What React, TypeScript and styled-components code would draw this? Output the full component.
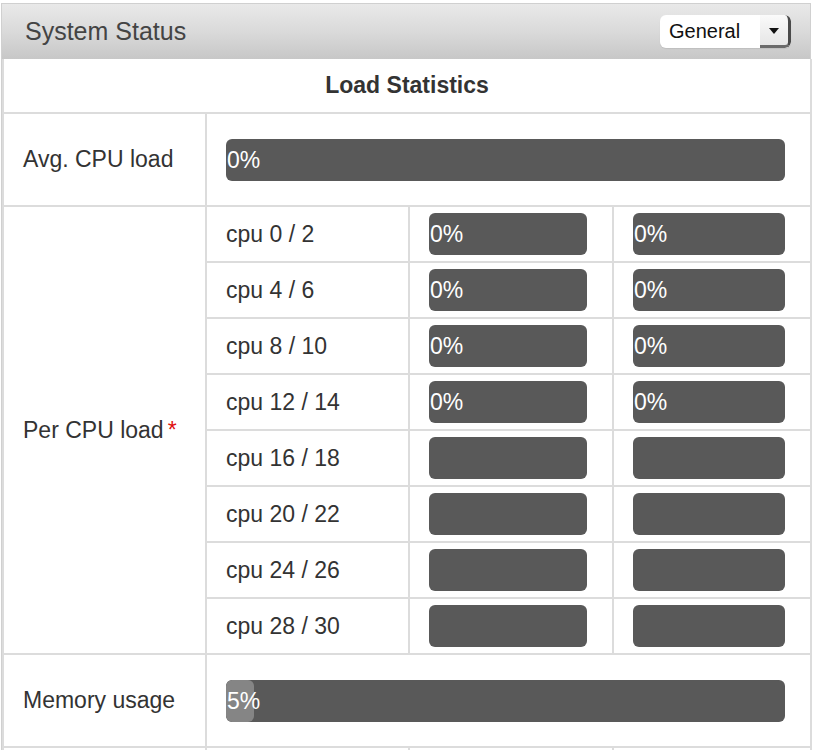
import React from 'react'
import styled, { createGlobalStyle } from 'styled-components'

const GlobalStyle = createGlobalStyle`
  body {
    margin: 0;
    background: #ffffff;
    font-family: "Liberation Sans", Arial, sans-serif;
    overflow: hidden;
  }
`

const Page = styled.div`
  padding: 3px 0 0 1px;
  height: 750px;
  box-sizing: border-box;
`

const Panel = styled.div`
  width: 810px;
  border: 1px solid #d0d0d0;
  border-bottom: none;
  box-sizing: border-box;
`

const Header = styled.div`
  display: flex;
  align-items: center;
  justify-content: space-between;
  height: 55px;
  padding: 0 19px 0 23px;
  background: linear-gradient(to bottom, #e9e9e9 0%, #dadada 50%, #c7c7c7 100%);
`

const Title = styled.h2`
  margin: 0;
  font-size: 25px;
  font-weight: normal;
  color: #444444;
`

const Select = styled.div`
  display: flex;
  align-items: stretch;
  width: 131px;
  height: 33px;
  background: #ffffff;
  border-radius: 6px;
  overflow: hidden;
  box-shadow: 0 1px 1px rgba(0, 0, 0, 0.08);
`

const SelectText = styled.span`
  flex: 1;
  display: flex;
  align-items: center;
  padding-left: 9px;
  font-size: 20px;
  color: #111111;
`

const SelectArrow = styled.span`
  display: flex;
  align-items: center;
  justify-content: center;
  width: 31px;
  background: linear-gradient(to bottom, #fafafa, #e6e6e6);
  border-right: 3px solid #4a4a4a;
  border-bottom: 3px solid #6a6a6a;
  border-bottom-right-radius: 6px;
  border-top-right-radius: 6px;
  box-sizing: border-box;
`

const Triangle = styled.span`
  width: 0;
  height: 0;
  border-left: 5px solid transparent;
  border-right: 5px solid transparent;
  border-top: 6px solid #111111;
  margin-top: 2px;
`

const Table = styled.table`
  width: 100%;
  border-collapse: collapse;
  table-layout: fixed;
  font-size: 23px;
  color: #333333;
`

const HeadCell = styled.th`
  height: 53px;
  padding: 0;
  border: 2px solid #dcdcdc;
  border-top: none;
  font-weight: bold;
  color: #333333;
  text-align: center;
`

const Cell = styled.td<{ $tall?: boolean }>`
  height: ${(p) => (p.$tall ? '91px' : '54px')};
  padding: 0 25px 0 19px;
  border: 2px solid #dcdcdc;
  vertical-align: middle;
  white-space: nowrap;
`

const Required = styled.span`
  color: #e01010;
  margin-left: 4px;
`

const Bar = styled.div`
  position: relative;
  height: 42px;
  background: #595959;
  border-radius: 6px;
  overflow: hidden;
`

const Fill = styled.div`
  height: 100%;
  background: #858585;
  border-radius: 6px;
`

const BarText = styled.span`
  position: absolute;
  left: 1px;
  top: 0;
  line-height: 42px;
  color: #ffffff;
  font-size: 23px;
`

type ProgressProps = { value?: number }

const Progress = ({ value }: ProgressProps) => (
  <Bar>
    {value !== undefined && <Fill style={{ width: `${value}%` }} />}
    {value !== undefined && <BarText>{value}%</BarText>}
  </Bar>
)

const cpus: [string, number | undefined, number | undefined][] = [
  ['cpu 0 / 2', 0, 0],
  ['cpu 4 / 6', 0, 0],
  ['cpu 8 / 10', 0, 0],
  ['cpu 12 / 14', 0, 0],
  ['cpu 16 / 18', undefined, undefined],
  ['cpu 20 / 22', undefined, undefined],
  ['cpu 24 / 26', undefined, undefined],
  ['cpu 28 / 30', undefined, undefined],
]

const App = () => {
  return (
    <Page>
      <GlobalStyle />
      <Panel>
        <Header>
          <Title>System Status</Title>
          <Select>
            <SelectText>General</SelectText>
            <SelectArrow>
              <Triangle />
            </SelectArrow>
          </Select>
        </Header>
        <Table>
          <colgroup>
            <col style={{ width: 203 }} />
            <col style={{ width: 203 }} />
            <col style={{ width: 204 }} />
            <col style={{ width: 198 }} />
          </colgroup>
          <tbody>
            <tr>
              <HeadCell colSpan={4}>Load Statistics</HeadCell>
            </tr>
            <tr>
              <Cell $tall>Avg. CPU load</Cell>
              <Cell $tall colSpan={3}>
                <Progress value={0} />
              </Cell>
            </tr>
            {cpus.map(([name, a, b], i) => (
              <tr key={name}>
                {i === 0 && (
                  <Cell rowSpan={cpus.length}>
                    Per CPU load<Required>*</Required>
                  </Cell>
                )}
                <Cell>{name}</Cell>
                <Cell>
                  <Progress value={a} />
                </Cell>
                <Cell>
                  <Progress value={b} />
                </Cell>
              </tr>
            ))}
            <tr>
              <Cell $tall>Memory usage</Cell>
              <Cell $tall colSpan={3}>
                <Progress value={5} />
              </Cell>
            </tr>
            <tr>
              <Cell $tall />
              <Cell $tall />
              <Cell $tall />
              <Cell $tall />
            </tr>
          </tbody>
        </Table>
      </Panel>
    </Page>
  )
}

export default App
